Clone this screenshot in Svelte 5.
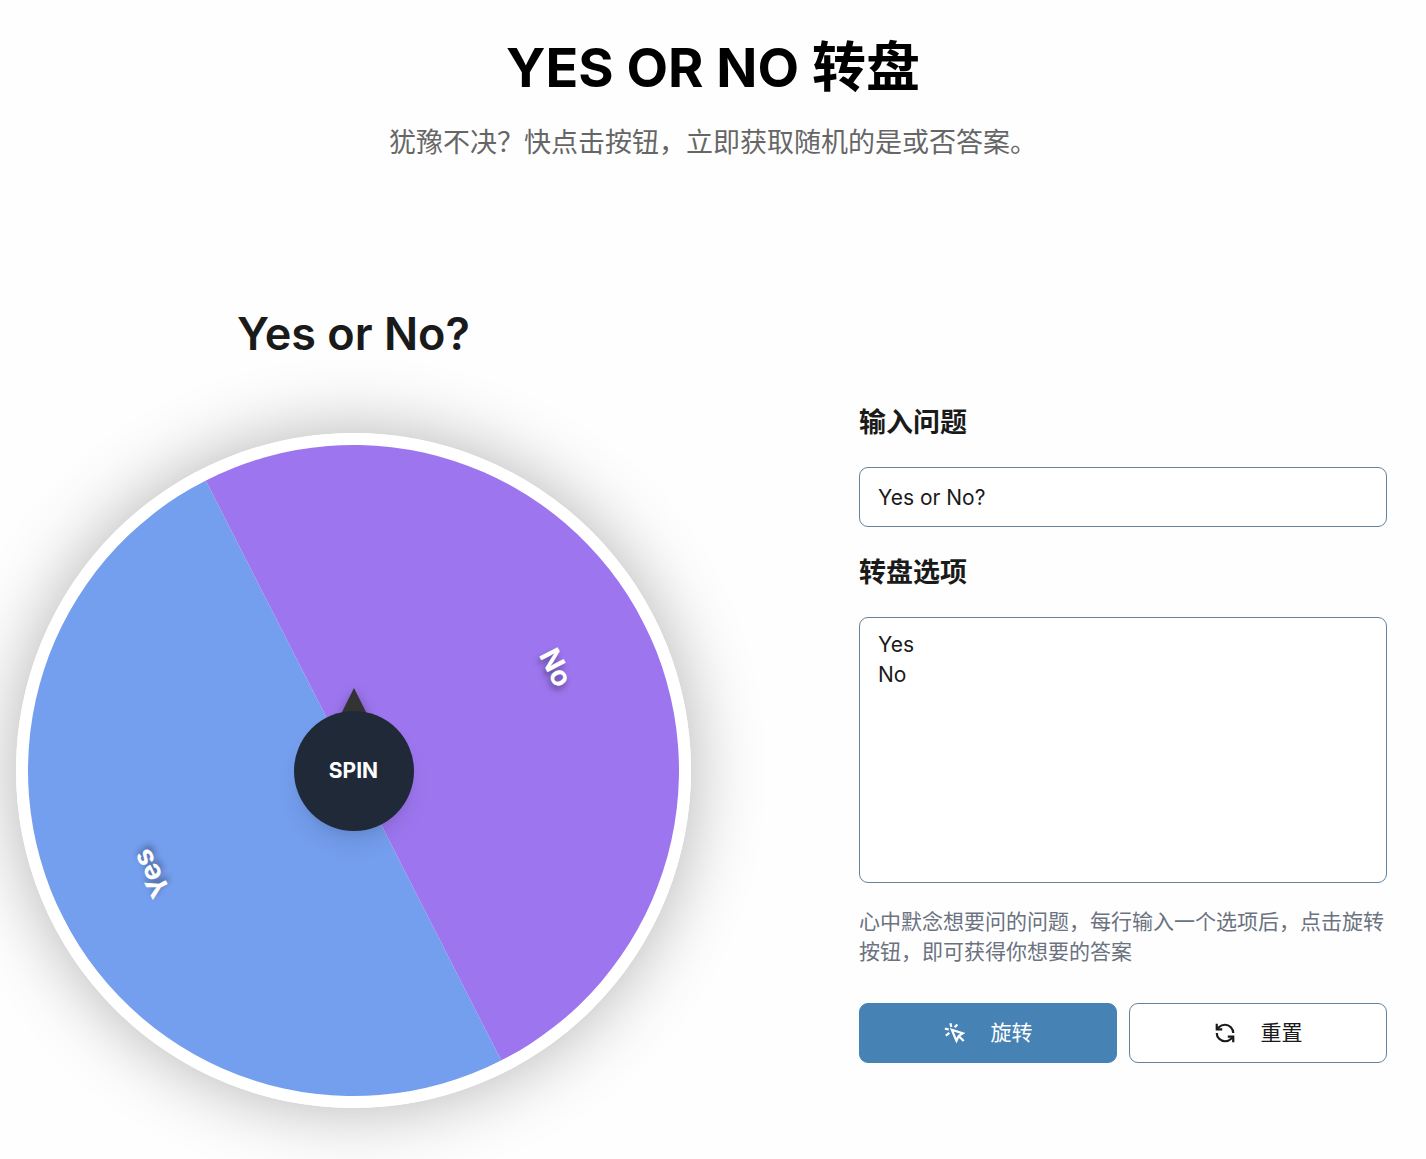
<script>
  let question = $state('Yes or No?')
  let options = $state('Yes\nNo')
  let rotation = $state(153)

  const colors = ['#9d76ef', '#749eee']
  const R = 325

  let slices = $derived.by(() => {
    const names = options.split('\n').filter((n) => n.trim())
    const step = 360 / names.length
    return names.map((name, i) => ({
      name,
      path: slicePath(step),
      angle: i * step,
      color: colors[(i + 1) % colors.length]
    }))
  })

  // slice centered on the x axis, rotated into place later
  function slicePath(step) {
    const a = (Math.min(step, 359.9) / 2) * Math.PI / 180
    const x = R * Math.cos(a)
    const y = R * Math.sin(a)
    return `M0 0 L${x} ${-y} A${R} ${R} 0 ${step > 180 ? 1 : 0} 1 ${x} ${y} Z`
  }

  function spin() {
    rotation += 1440 + Math.random() * 360
  }

  function reset() {
    question = 'Yes or No?'
    options = 'Yes\nNo'
    rotation = 153
  }
</script>

<main>
  <header>
    <h1>YES OR NO 转盘</h1>
    <p>犹豫不决？快点击按钮，立即获取随机的是或否答案。</p>
  </header>

  <div class="content">
    <section class="wheel-panel">
      <h2>{question}</h2>
      <div class="wheel">
        <svg class="slices" viewBox="-325 -325 650 650" style="transform: rotate({rotation}deg)">
          {#each slices as s}
            <g transform="rotate({s.angle})">
              <path d={s.path} fill={s.color} />
              <text transform="translate(227 0) rotate(90)" text-anchor="middle" dominant-baseline="central">{s.name}</text>
            </g>
          {/each}
        </svg>
        <div class="pointer"></div>
        <button class="spin" onclick={spin}>SPIN</button>
      </div>
    </section>

    <section class="form">
      <label for="question">输入问题</label>
      <input id="question" type="text" bind:value={question} />
      <label for="options">转盘选项</label>
      <textarea id="options" bind:value={options}></textarea>
      <p>心中默念想要问的问题，每行输入一个选项后，点击旋转按钮，即可获得你想要的答案</p>
      <div class="actions">
        <button class="primary" onclick={spin}>
          <svg viewBox="0 0 24 24">
            <path d="M8.5 8.5 20.5 12.4 16 15.2 13.6 20.4Z" />
            <path d="m16 15.2 5.5 5.6" />
            <path d="M7 1.4 8 5.4" />
            <path d="M5.2 8.2 1 7.2" />
            <path d="M14.6 2.6 11.6 5.8" />
            <path d="M5.8 11.8 2 14.8" />
          </svg>
          旋转
        </button>
        <button onclick={reset}>
          <svg viewBox="0 0 24 24">
            <path d="M21 12a9 9 0 0 0-9-9 9.75 9.75 0 0 0-6.74 2.74L3 8" />
            <path d="M3 2v6h6" />
            <path d="M3 12a9 9 0 0 0 9 9 9.75 9.75 0 0 0 6.74-2.74L21 16" />
            <path d="M15 16h6v6" />
          </svg>
          重置
        </button>
      </div>
    </section>
  </div>
</main>

<style>
  :global(body) {
    margin: 0;
    background: #fefefe;
  }
  main, button, input, textarea {
    font-family: Inter, "Noto Sans CJK SC", sans-serif;
    color: #1a1a1a;
  }
  main {
    padding-top: 32px;
    font-size: 21px;
    line-height: 30px;
  }
  header {
    text-align: center;
  }
  h1 {
    margin: 0;
    font-size: 54px;
    line-height: 72px;
    font-weight: 700;
    color: #000;
  }
  header p {
    margin: 18px 0 0;
    font-size: 27px;
    line-height: 42px;
    color: #666;
  }
  .content {
    display: grid;
    grid-template-columns: 675fr 528fr;
    gap: 168px;
    padding: 143px 39px 51px 16px;
  }
  h2 {
    margin: 0 0 72px;
    font-size: 45px;
    line-height: 54px;
    font-weight: 600;
    text-align: center;
  }
  .wheel {
    position: relative;
    display: grid;
    place-items: center;
    box-sizing: border-box;
    aspect-ratio: 1;
    border: 12px solid #fff;
    border-radius: 50%;
    box-shadow: 0 0 72px rgba(0, 0, 0, 0.3);
  }
  .slices {
    display: block;
    width: 100%;
    transition: transform 4s ease-out;
  }
  .slices text {
    font-size: 28px;
    font-weight: 700;
    fill: #fff;
    text-shadow: 3px 3px 6px rgba(0, 0, 0, 0.4);
  }
  .pointer {
    position: absolute;
    top: 50%;
    left: 50%;
    margin: -83px 0 0 -15px;
    border: 15px solid transparent;
    border-top: 0;
    border-bottom: 30px solid #333;
    filter: drop-shadow(0 3px 6px rgba(0, 0, 0, 0.3));
  }
  .spin {
    position: absolute;
    width: 120px;
    height: 120px;
    border: 0;
    border-radius: 50%;
    background: #1f2937;
    color: #fff;
    font-size: 21px;
    font-weight: 700;
    box-shadow: 0 15px 22px -4px rgba(0, 0, 0, 0.1), 0 6px 9px -6px rgba(0, 0, 0, 0.1);
    cursor: pointer;
  }
  .form {
    display: flex;
    flex-direction: column;
    padding-top: 97px;
  }
  label {
    font-size: 27px;
    line-height: 38px;
    font-weight: 700;
    margin-bottom: 25px;
  }
  input, textarea {
    box-sizing: border-box;
    width: 100%;
    padding: 12px 18px;
    border: 1px solid #64829b;
    border-radius: 9px;
    background: #fff;
    font-size: 21px;
    line-height: 30px;
  }
  input {
    height: 60px;
    margin-bottom: 27px;
  }
  textarea {
    height: 266px;
    resize: none;
  }
  .form p {
    margin: 24px 0 36px;
    color: #6b7280;
  }
  .actions {
    display: flex;
    gap: 12px;
  }
  .actions button {
    flex: 1;
    display: flex;
    align-items: center;
    justify-content: center;
    gap: 25px;
    height: 60px;
    border: 1px solid #64829b;
    border-radius: 9px;
    background: #fff;
    font-size: 21px;
    line-height: 30px;
    cursor: pointer;
  }
  .actions .primary {
    border-color: #4682b4;
    background: #4682b4;
    color: #fff;
  }
  .actions svg {
    width: 22px;
    height: 22px;
    fill: none;
    stroke: currentColor;
    stroke-width: 2.4;
  }
</style>
